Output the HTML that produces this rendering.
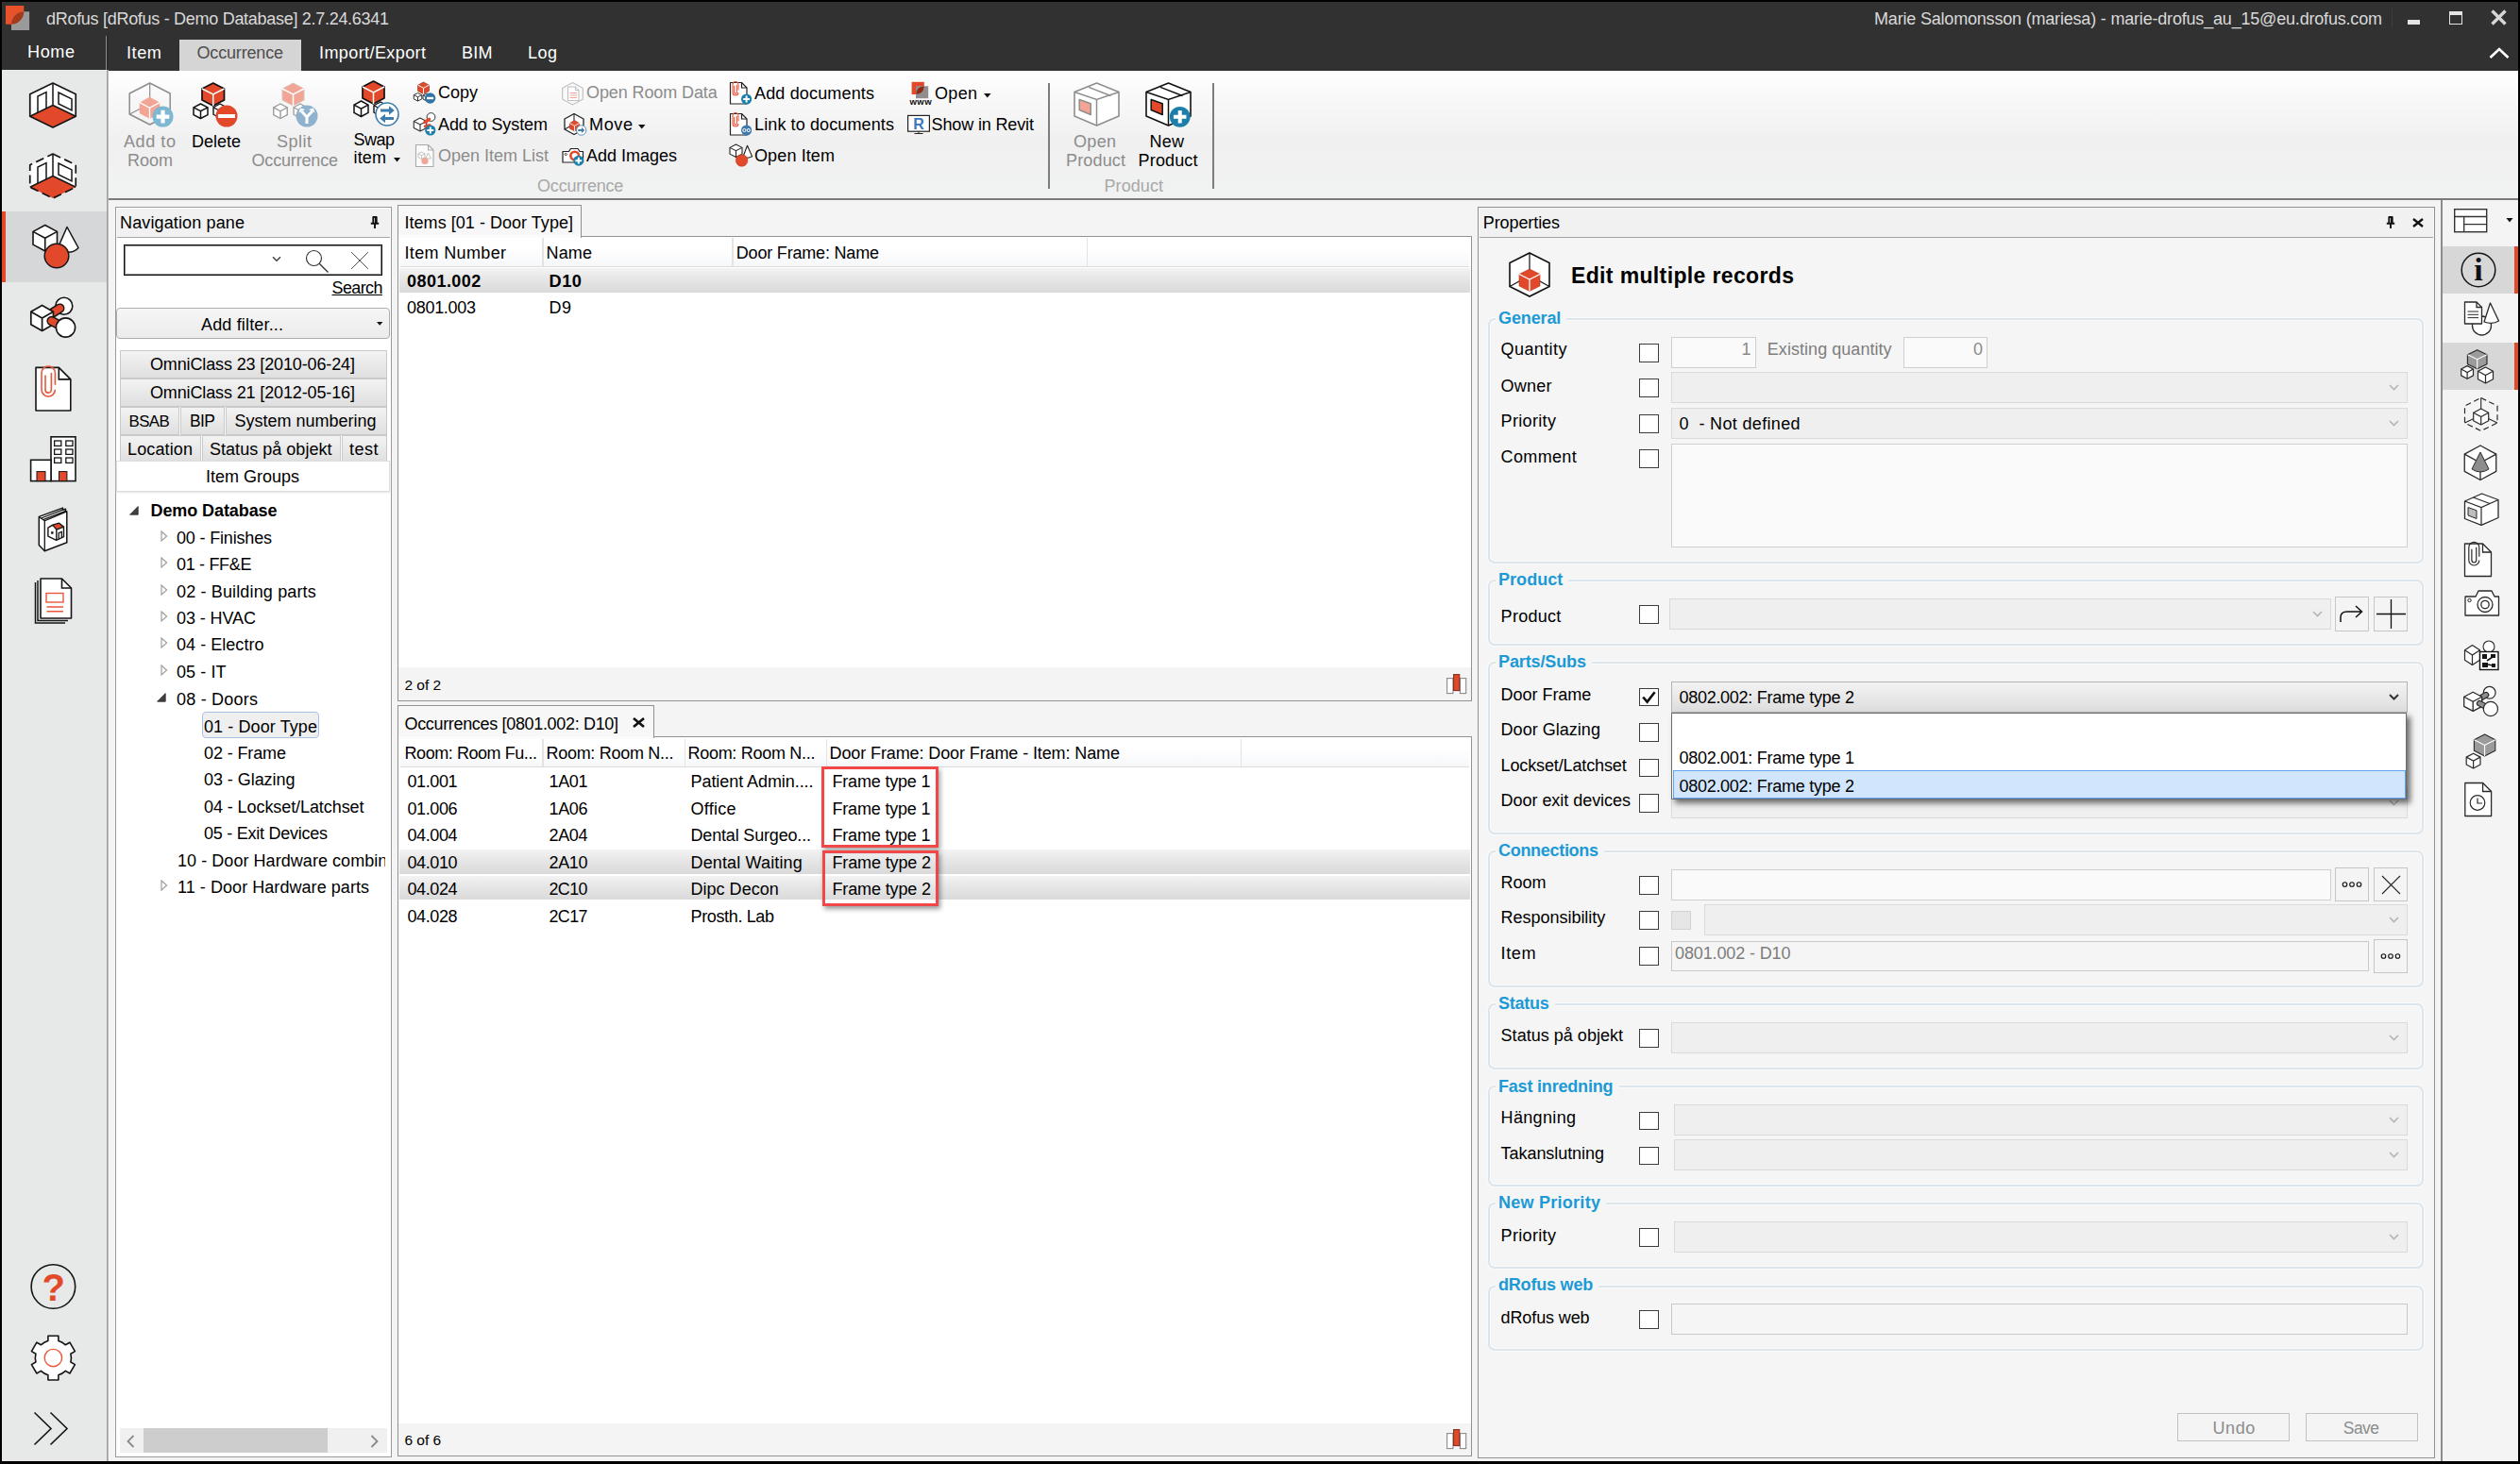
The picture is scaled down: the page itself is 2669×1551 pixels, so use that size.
<!DOCTYPE html>
<html lang="en"><head><meta charset="utf-8"><title>dRofus [dRofus - Demo Database] 2.7.24.6341</title>
<style>
html,body{margin:0;padding:0}
body{width:2669px;height:1551px;position:relative;overflow:hidden;background:#f4f4f4;
font-family:"Liberation Sans",sans-serif;font-size:18px;color:#000}
body div,body span.t,body svg{position:absolute;box-sizing:border-box}
span.t{white-space:nowrap;display:block}
svg{overflow:visible}
.cb{border:1.5px solid #3c3c3c;background:#fff}
.combo{background:#efefef;border:1px solid #dadada}
.inp{background:#fafafa;border:1px solid #cfcfcf}
.btn{background:#f4f4f4;border:1px solid #c6c6c6}
.grp{border:2px solid #dce5eb;border-radius:7px;box-shadow:inset 0 0 0 1px #fbfbfb,0 0 0 1px #f9fafb}
.tab{background:linear-gradient(#f3f3f3,#dfdfdf);border:1px solid #c9c9c9}
.selrow{background:linear-gradient(#f3f3f3 0%,#e6e6e6 45%,#dadada 100%)}
</style></head><body>
<div style="left:0px;top:0px;width:2669px;height:1551px;background:#000"></div>
<div style="left:2px;top:2px;width:2664.5px;height:1545.5px;background:#f4f4f4"></div>
<div style="left:2px;top:2px;width:2664.5px;height:72px;background:#313131"></div>
<div style="left:114.5px;top:74px;width:2552px;height:1px;background:#313131"></div>
<svg style="left:0px;top:0px;" width="34" height="34" viewBox="0 0 34 34"><path d="M6 6 H25.3 V12.3 A13.3 13.4 0 0 1 12 25.7 H6 Z" fill="#e8522b"/><path d="M31.1 32 H12 V25.7 A13.3 13.4 0 0 1 25.3 12.3 H31.1 Z" fill="#9a9a9a"/><path d="M12 25.7 A13.3 13.4 0 0 1 25.3 12.3 A13.3 13.4 0 0 1 12 25.7 Z" fill="#a6391b"/></svg>
<span id="t1" class="t" style="top:10px;font-size:18px;line-height:20px;color:#d9d9d9;left:49.00px;letter-spacing:-0.291px;">dRofus [dRofus - Demo Database] 2.7.24.6341</span>
<span id="t2" class="t" style="top:10px;font-size:18px;line-height:20px;color:#d9d9d9;left:1985.00px;letter-spacing:-0.189px;">Marie Salomonsson (mariesa) - marie-drofus_au_15@eu.drofus.com</span>
<div style="left:2532.5px;top:9px;width:1px;height:21px;background:#3d3d3d"></div>
<div style="left:2550px;top:21px;width:13px;height:5px;background:#e4e4e4"></div>
<div style="left:2593.5px;top:12px;width:14.5px;height:13.5px;border:1.5px solid #e4e4e4;border-top-width:4px"></div>
<svg style="left:2638px;top:10px;" width="17" height="17" viewBox="0 0 17 17"><path d="M1.5 1.5 L15.5 15.5 M15.5 1.5 L1.5 15.5" stroke="#d6d6d6" stroke-width="3.4" fill="none"/></svg>
<svg style="left:2636px;top:50px;" width="22" height="13" viewBox="0 0 22 13"><path d="M1.5 11 L11 2 L20.5 11" stroke="#fff" stroke-width="2.6" fill="none"/></svg>
<div style="left:111.6px;top:38px;width:1.5px;height:36px;background:#8c8c8c"></div>
<div style="left:113.1px;top:38px;width:2px;height:36px;background:#2a2a2a"></div>
<span id="t3" class="t" style="top:45px;font-size:18.13px;line-height:20px;color:#fff;left:29.00px;letter-spacing:0.550px;">Home</span>
<span id="t4" class="t" style="top:46px;font-size:18.17px;line-height:20px;color:#fff;left:134.00px;letter-spacing:0.550px;">Item</span>
<div style="left:190px;top:42px;width:129px;height:33px;background:#d5d5d5"></div>
<span id="t5" class="t" style="top:46px;font-size:18px;line-height:20px;color:#4d4d4d;left:208.50px;letter-spacing:-0.172px;">Occurrence</span>
<span id="t6" class="t" style="top:46px;font-size:18px;line-height:20px;color:#fff;left:338.00px;letter-spacing:0.413px;">Import/Export</span>
<span id="t7" class="t" style="top:46px;font-size:18px;line-height:20px;color:#fff;left:489.00px;letter-spacing:0.242px;">BIM</span>
<span id="t8" class="t" style="top:46px;font-size:18px;line-height:20px;color:#fff;left:559.00px;letter-spacing:0.477px;">Log</span>
<div style="left:2px;top:74px;width:110.5px;height:1473.5px;background:#e7e8e8"></div>
<div style="left:112.5px;top:74px;width:2px;height:1473.5px;background:linear-gradient(90deg,#8f8f8f,#c9c9c9)"></div>
<div style="left:2px;top:224px;width:110.5px;height:75px;background:#d6d7d9"></div>
<div style="left:2px;top:224px;width:4px;height:75px;background:#e2492b"></div>
<div style="left:114.5px;top:75px;width:2552px;height:135px;background:linear-gradient(#ffffff 0%,#f9f9f9 18%,#f0f0f0 55%,#f1f2f2 100%)"></div>
<div style="left:114.5px;top:209.5px;width:2552px;height:2px;background:#7b7b7b"></div>
<div style="left:1110px;top:88px;width:2px;height:111.5px;background:#7d7d7d"></div>
<div style="left:1284px;top:88px;width:2px;height:111.5px;background:#7d7d7d"></div>
<div style="left:2585px;top:211.5px;width:1.5px;height:1336px;background:#8c8c8c"></div>
<div style="left:2586.5px;top:211.5px;width:80px;height:1336px;background:#f4f4f4"></div>
<div style="left:2586.5px;top:260.5px;width:80px;height:50.5px;background:#d7d7d7"></div>
<div style="left:2663px;top:260.5px;width:3.5px;height:50.5px;background:#e2492b"></div>
<div style="left:2586.5px;top:362.5px;width:80px;height:50.5px;background:#d7d7d7"></div>
<div style="left:2663px;top:362.5px;width:3.5px;height:50.5px;background:#e2492b"></div>
<svg style="left:0;top:0" width="2669" height="220" viewBox="0 0 2669 220"><path d="M158.7 88 L180.2 99.0 V121.0 L158.7 132 L137.2 121.0 V99.0 Z" fill="none" stroke="#8d8d8d" stroke-width="1.5" stroke-linejoin="round"/><path d="M158.7 88 V110.0 L137.2 121.0 M158.7 110.0 L180.2 121.0" fill="none" stroke="#8d8d8d" stroke-width="1.2000000000000002"/><path d="M158.5 103 L169.0 108.625 V119.875 L158.5 125.5 L148.0 119.875 V108.625 Z" fill="#f2a495" stroke="#f2a495" stroke-width="0.5" stroke-linejoin="round"/><path d="M148.0 108.625 L158.5 114.25 L169.0 108.625 M158.5 114.25 V125.5" fill="none" stroke="#fff" stroke-width="1.4"/><circle cx="172.5" cy="123.6" r="11" fill="#7db7d1"/><path d="M165.68 123.6 H179.32 M172.5 116.78 V130.42" stroke="#fff" stroke-width="4.2"/><path d="M233 110 L240.0 113.75 V121.25 L233 125 L226.0 121.25 V113.75 Z" fill="#fff" stroke="#111" stroke-width="1.4" stroke-linejoin="round"/><path d="M226.0 113.75 L233 117.5 L240.0 113.75 M233 117.5 V125" fill="none" stroke="#111" stroke-width="1.4"/><path d="M225.75 88 L237.5 94.0 V106.0 L225.75 112 L214.0 106.0 V94.0 Z" fill="#e2492b" stroke="#111" stroke-width="1.7" stroke-linejoin="round"/><path d="M214.0 94.0 L225.75 100.0 L237.5 94.0 M225.75 100.0 V112" fill="none" stroke="#fff" stroke-width="1.5"/><path d="M212.5 110 L220.0 113.875 V121.625 L212.5 125.5 L205.0 121.625 V113.875 Z" fill="#fff" stroke="#111" stroke-width="1.5" stroke-linejoin="round"/><path d="M205.0 113.875 L212.5 117.75 L220.0 113.875 M212.5 117.75 V125.5" fill="none" stroke="#111" stroke-width="1.5"/><circle cx="240" cy="123" r="11.5" fill="#e2492b"/><rect x="231" y="121" width="18" height="4" fill="#fff"/><path d="M318 110 L325.0 113.75 V121.25 L318 125 L311.0 121.25 V113.75 Z" fill="#fff" stroke="#9c9c9c" stroke-width="1.3" stroke-linejoin="round"/><path d="M311.0 113.75 L318 117.5 L325.0 113.75 M318 117.5 V125" fill="none" stroke="#9c9c9c" stroke-width="1.3"/><path d="M310.5 88 L322.0 94.0 V106.0 L310.5 112 L299.0 106.0 V94.0 Z" fill="#f2a495" stroke="#d9c2bd" stroke-width="1" stroke-linejoin="round"/><path d="M299.0 94.0 L310.5 100.0 L322.0 94.0 M310.5 100.0 V112" fill="none" stroke="#fff" stroke-width="1.5"/><path d="M297 110 L304.25 113.875 V121.625 L297 125.5 L289.75 121.625 V113.875 Z" fill="#fff" stroke="#9c9c9c" stroke-width="1.4" stroke-linejoin="round"/><path d="M289.75 113.875 L297 117.75 L304.25 113.875 M297 117.75 V125.5" fill="none" stroke="#9c9c9c" stroke-width="1.4"/><circle cx="325" cy="123" r="11.5" fill="#8fb2cf"/><path d="M325 131 V124 L319.5 118 M325 124 L330.5 118" stroke="#fff" stroke-width="3" fill="none"/><path d="M316.5 119.5 L318 114.5 L323 116 Z M333.5 119.5 L332 114.5 L327 116 Z" fill="#fff"/><path d="M403 108 L410.0 111.75 V119.25 L403 123 L396.0 119.25 V111.75 Z" fill="#fff" stroke="#111" stroke-width="1.4" stroke-linejoin="round"/><path d="M396.0 111.75 L403 115.5 L410.0 111.75 M403 115.5 V123" fill="none" stroke="#111" stroke-width="1.4"/><path d="M395.5 86 L407.0 92.0 V104.0 L395.5 110 L384.0 104.0 V92.0 Z" fill="#e2492b" stroke="#111" stroke-width="1.7" stroke-linejoin="round"/><path d="M384.0 92.0 L395.5 98.0 L407.0 92.0 M395.5 98.0 V110" fill="none" stroke="#fff" stroke-width="1.5"/><path d="M382.5 107 L390.0 111.125 V119.375 L382.5 123.5 L375.0 119.375 V111.125 Z" fill="#fff" stroke="#111" stroke-width="1.5" stroke-linejoin="round"/><path d="M375.0 111.125 L382.5 115.25 L390.0 111.125 M382.5 115.25 V123.5" fill="none" stroke="#111" stroke-width="1.5"/><circle cx="410" cy="121" r="12" fill="#fff" stroke="#3d7cad" stroke-width="1.6"/><path d="M403 117 H413 M407 125.5 H417" stroke="#3d7cad" stroke-width="3"/><path d="M412 112.2 L417.8 117 L412 121.8 Z M408 120.7 L402.2 125.5 L408 130.3 Z" fill="#3d7cad"/><path d="M448.5 87 L454.5 90.125 V96.375 L448.5 99.5 L442.5 96.375 V90.125 Z" fill="#e2492b" stroke="#8a2a17" stroke-width="0.6" stroke-linejoin="round"/><path d="M442.5 90.125 L448.5 93.25 L454.5 90.125 M448.5 93.25 V99.5" fill="none" stroke="#fff" stroke-width="1"/><path d="M442.5 98.5 L446.75 100.625 V104.875 L442.5 107.0 L438.25 104.875 V100.625 Z" fill="#fff" stroke="#333" stroke-width="1" stroke-linejoin="round"/><path d="M438.25 100.625 L442.5 102.75 L446.75 100.625 M442.5 102.75 V107.0" fill="none" stroke="#333" stroke-width="1"/><path d="M452 99 L456.0 101.0 V105.0 L452 107 L448.0 105.0 V101.0 Z" fill="#fff" stroke="#333" stroke-width="1" stroke-linejoin="round"/><path d="M448.0 101.0 L452 103.0 L456.0 101.0 M452 103.0 V107" fill="none" stroke="#333" stroke-width="1"/><circle cx="455.6" cy="104" r="5.7" fill="#2f74a3"/><rect x="452" y="102.8" width="7.2" height="2.4" fill="#fff"/><path d="M445 125 L451.75 128.5 V135.5 L445 139 L438.25 135.5 V128.5 Z" fill="#fff" stroke="#333" stroke-width="1.1" stroke-linejoin="round"/><path d="M438.25 128.5 L445 132.0 L451.75 128.5 M445 132.0 V139" fill="none" stroke="#333" stroke-width="1.1"/><circle cx="456.5" cy="124" r="4.4" fill="#fff" stroke="#333" stroke-width="1"/><path d="M450 129.5 L454.5 126.3 M450.5 134 L455 133" stroke="#e2492b" stroke-width="3.4" stroke-linecap="round"/><circle cx="455.8" cy="138" r="5.6" fill="#1b7faa"/><path d="M452.32800000000003 138 H459.272 M455.8 134.528 V141.472" stroke="#fff" stroke-width="2"/><path d="M440.5 153.5 H453.5 L459.0 159.0 V176.5 H440.5 Z" fill="#fbfbfb" stroke="#a9a9a9" stroke-width="1.1" stroke-linejoin="round"/><path d="M453.5 153.5 V159.0 H459.0" fill="none" stroke="#a9a9a9" stroke-width="1.1"/><path d="M446.5 161 L450.0 162.875 V166.625 L446.5 168.5 L443.0 166.625 V162.875 Z" fill="#fff" stroke="#b5b5b5" stroke-width="0.8" stroke-linejoin="round"/><path d="M443.0 162.875 L446.5 164.75 L450.0 162.875 M446.5 164.75 V168.5" fill="none" stroke="#b5b5b5" stroke-width="0.8"/><path d="M453.5 162 L456.5 168 H450.8 Z" fill="#fff" stroke="#b5b5b5" stroke-width=".8"/><circle cx="450" cy="170.5" r="3.6" fill="#f2a495"/><path d="M606.5 87.5 L617.3 93.3 V105.2 L606.5 111 L595.7 105.2 V93.3 Z" fill="#fafafa" stroke="#bdbdbd" stroke-width="1.1"/><path d="M601.5 92 H609.5 L613.0 95.5 V106.5 H601.5 Z" fill="#fff" stroke="#b5b5b5" stroke-width="0.9" stroke-linejoin="round"/><path d="M609.5 92 V95.5 H613.0" fill="none" stroke="#b5b5b5" stroke-width="0.9"/><path d="M603.5 98.5 H611 M603.5 101 H611 M603.5 103.5 H611" stroke="#f2a495" stroke-width="1"/><path d="M608 120.5 L618.0 126.0 V137.0 L608 142.5 L598.0 137.0 V126.0 Z" fill="#fff" stroke="#222" stroke-width="1.3" stroke-linejoin="round"/><path d="M608 120.5 V131.5 L598.0 137.0 M608 131.5 L618.0 137.0" fill="none" stroke="#222" stroke-width="1.04"/><path d="M608.5 127.5 L613.75 130.375 V136.125 L608.5 139.0 L603.25 136.125 V130.375 Z" fill="#e2492b" stroke="#a5351f" stroke-width="0.5" stroke-linejoin="round"/><path d="M603.25 130.375 L608.5 133.25 L613.75 130.375 M608.5 133.25 V139.0" fill="none" stroke="#fff" stroke-width="0.9"/><circle cx="615.7" cy="138" r="5.2" fill="#fff" stroke="#5b8fbb" stroke-width="1"/><path d="M612.3 138 H616.5" stroke="#3d7cad" stroke-width="2"/><path d="M616 135 L619.3 138 L616 141 Z" fill="#3d7cad"/><path d="M596 160.5 H602.5 L604.5 157.5 H612 L614 160.5 H617.5 V172 H596 Z" fill="#fff" stroke="#222" stroke-width="1.2" stroke-linejoin="round"/><circle cx="599.3" cy="163.5" r="1.1" fill="none" stroke="#222" stroke-width=".8"/><circle cx="608.7" cy="165" r="4.3" fill="#fff" stroke="#e2492b" stroke-width="2.6"/><circle cx="612.8" cy="170.2" r="5.5" fill="#1b7faa"/><path d="M609.39 170.2 H616.2099999999999 M612.8 166.79 V173.60999999999999" stroke="#fff" stroke-width="2"/><path d="M773.5 87.5 H785.5 L791.0 93.0 V110.0 H773.5 Z" fill="#fff" stroke="#222" stroke-width="1.2" stroke-linejoin="round"/><path d="M785.5 87.5 V93.0 H791.0" fill="none" stroke="#222" stroke-width="1.2"/><path d="M782 95.49 V89.5 A3.0 3.0 0 0 0 776 89.5 V98.0 A3.0 3.0 0 0 0 782 98.0" fill="none" stroke="#e9573d" stroke-width="1.1"/><path d="M777.68 90.85 V97.81 A1.32 1.32 0 0 0 780.32 97.81 V89.69" fill="none" stroke="#e9573d" stroke-width="1.1"/><circle cx="790.6" cy="105" r="5.6" fill="#1b7faa"/><path d="M787.128 105 H794.072 M790.6 101.528 V108.472" stroke="#fff" stroke-width="2"/><path d="M773.5 120.5 H785.5 L791.0 126.0 V143.0 H773.5 Z" fill="#fff" stroke="#222" stroke-width="1.2" stroke-linejoin="round"/><path d="M785.5 120.5 V126.0 H791.0" fill="none" stroke="#222" stroke-width="1.2"/><path d="M782 128.49 V122.5 A3.0 3.0 0 0 0 776 122.5 V131.0 A3.0 3.0 0 0 0 782 131.0" fill="none" stroke="#e9573d" stroke-width="1.1"/><path d="M777.68 123.85 V130.81 A1.32 1.32 0 0 0 780.32 130.81 V122.69" fill="none" stroke="#e9573d" stroke-width="1.1"/><circle cx="790.6" cy="138" r="5.6" fill="#3f79ae"/><circle cx="788.4" cy="138" r="1.6" fill="none" stroke="#fff" stroke-width="1"/><circle cx="792.8" cy="138" r="1.6" fill="none" stroke="#fff" stroke-width="1"/><path d="M779.5 153 L786.0 156.375 V163.125 L779.5 166.5 L773.0 163.125 V156.375 Z" fill="#fff" stroke="#222" stroke-width="1.1" stroke-linejoin="round"/><path d="M773.0 156.375 L779.5 159.75 L786.0 156.375 M779.5 159.75 V166.5" fill="none" stroke="#222" stroke-width="1.1"/><path d="M791.5 154.3 L796.6 165.8 Q792 168.5 787 166 Z" fill="#fff" stroke="#222" stroke-width="1.1" stroke-linejoin="round"/><circle cx="785.6" cy="170" r="6.3" fill="#e2492b" stroke="#b7351c" stroke-width=".5"/><rect x="965.6" y="86.8" width="13.2" height="13.2" fill="#e2492b"/><rect x="970" y="91.2" width="13.2" height="13" fill="#8f8f8f"/><path d="M970.3 99.6 C970.3 94.5 973.8 91.4 978.6 91.4 C978.6 96.6 975 99.6 970.3 99.6Z" fill="#8e2a17"/><rect x="961.6" y="122.4" width="22.8" height="16.8" fill="#fff" stroke="#222" stroke-width="1.2"/><path d="M973 139.2 V141.3 M968.5 141.5 H977.5" stroke="#222" stroke-width="1"/></svg>
<span id="t9" class="t" style="top:123px;font-size:16px;line-height:17px;color:#3a76bd;font-weight:700;left:973.00px;transform:translateX(-50%);">R</span>
<span id="t10" class="t" style="top:102px;font-size:9.55px;line-height:11px;color:#111;font-weight:700;left:963.40px;letter-spacing:0.550px;">www</span>
<svg style="left:0;top:0" width="2669" height="220" viewBox="0 0 2669 220"><path d="M1138 97.5 L1161.5 88 L1185 97.5 V123 L1161.5 133 L1138 123 Z" fill="#fff" stroke="#8f8f8f" stroke-width="1.6" stroke-linejoin="round"/><path d="M1138 97.5 L1161.5 105.5 L1185 97.5 M1161.5 105.5 V133" fill="none" stroke="#8f8f8f" stroke-width="1.5"/><path d="M1153 92.4 L1176.5 101.5" stroke="#8f8f8f" stroke-width="1.5"/><path d="M1143.2 105.5 L1155.2 109.7 V121.5 L1143.2 116.5 Z" fill="#f2a495" stroke="#8f8f8f" stroke-width="1.5" stroke-linejoin="round"/><path d="M1214 97.5 L1237.5 88 L1261 97.5 V123 L1237.5 133 L1214 123 Z" fill="#fff" stroke="#111" stroke-width="1.6" stroke-linejoin="round"/><path d="M1214 97.5 L1237.5 105.5 L1261 97.5 M1237.5 105.5 V133" fill="none" stroke="#111" stroke-width="1.5"/><path d="M1229 92.4 L1252.5 101.5" stroke="#111" stroke-width="1.5"/><path d="M1219.2 105.5 L1231.2 109.7 V121.5 L1219.2 116.5 Z" fill="#e2492b" stroke="#111" stroke-width="1.5" stroke-linejoin="round"/><circle cx="1249.7" cy="123.8" r="10.9" fill="#1b7faa"/><path d="M1242.942 123.8 H1256.458 M1249.7 117.042 V130.558" stroke="#fff" stroke-width="4"/></svg>
<span id="t11" class="t" style="top:140px;font-size:18.07px;line-height:20px;color:#8c8c8c;left:131.00px;letter-spacing:0.550px;">Add to</span>
<span id="t12" class="t" style="top:160px;font-size:18px;line-height:20px;color:#8c8c8c;left:135.00px;letter-spacing:-0.005px;">Room</span>
<span id="t13" class="t" style="top:140px;font-size:18px;line-height:20px;left:203.00px;letter-spacing:-0.006px;">Delete</span>
<span id="t14" class="t" style="top:140px;font-size:18px;line-height:20px;color:#8c8c8c;left:293.00px;letter-spacing:0.496px;">Split</span>
<span id="t15" class="t" style="top:160px;font-size:18px;line-height:20px;color:#8c8c8c;left:266.50px;letter-spacing:-0.172px;">Occurrence</span>
<span id="t16" class="t" style="top:138px;font-size:18px;line-height:20px;left:374.60px;letter-spacing:-0.544px;">Swap</span>
<span id="t17" class="t" style="top:157px;font-size:18px;line-height:20px;left:374.60px;letter-spacing:0.128px;">item</span>
<svg style="left:417px;top:166.5px;" width="7" height="4.5" viewBox="0 0 7 4.5"><path d="M0 0 H7 L3.5 4.5 Z" fill="#111"/></svg>
<span id="t18" class="t" style="top:88px;font-size:18px;line-height:20px;left:464.00px;letter-spacing:-0.010px;">Copy</span>
<span id="t19" class="t" style="top:122px;font-size:18px;line-height:20px;left:464.00px;letter-spacing:-0.089px;">Add to System</span>
<span id="t20" class="t" style="top:155px;font-size:18px;line-height:20px;color:#8c8c8c;left:464.00px;letter-spacing:-0.005px;">Open Item List</span>
<span id="t21" class="t" style="top:88px;font-size:18px;line-height:20px;color:#8c8c8c;left:621.00px;letter-spacing:-0.102px;">Open Room Data</span>
<span id="t22" class="t" style="top:122px;font-size:18.14px;line-height:20px;left:624.00px;letter-spacing:0.550px;">Move</span>
<svg style="left:675.5px;top:131.5px;" width="7.5" height="4.5" viewBox="0 0 7.5 4.5"><path d="M0 0 H7.5 L3.75 4.5 Z" fill="#111"/></svg>
<span id="t23" class="t" style="top:155px;font-size:18px;line-height:20px;left:621.00px;letter-spacing:-0.007px;">Add Images</span>
<span id="t24" class="t" style="top:89px;font-size:18px;line-height:20px;left:799.00px;letter-spacing:0.160px;">Add documents</span>
<span id="t25" class="t" style="top:122px;font-size:18px;line-height:20px;left:799.00px;letter-spacing:0.119px;">Link to documents</span>
<span id="t26" class="t" style="top:155px;font-size:18px;line-height:20px;left:799.00px;letter-spacing:0.119px;">Open Item</span>
<span id="t27" class="t" style="top:89px;font-size:18px;line-height:20px;left:990.00px;letter-spacing:0.318px;">Open</span>
<svg style="left:1041.5px;top:98.5px;" width="7.5" height="4.5" viewBox="0 0 7.5 4.5"><path d="M0 0 H7.5 L3.75 4.5 Z" fill="#111"/></svg>
<span id="t28" class="t" style="top:122px;font-size:18px;line-height:20px;left:986.50px;letter-spacing:-0.130px;">Show in Revit</span>
<span id="t29" class="t" style="top:187px;font-size:18px;line-height:20px;color:#a8a8a8;left:569.00px;letter-spacing:-0.183px;">Occurrence</span>
<span id="t30" class="t" style="top:140px;font-size:18px;line-height:20px;color:#8c8c8c;left:1137.00px;letter-spacing:0.318px;">Open</span>
<span id="t31" class="t" style="top:160px;font-size:18px;line-height:20px;color:#8c8c8c;left:1129.00px;letter-spacing:0.159px;">Product</span>
<span id="t32" class="t" style="top:140px;font-size:18px;line-height:20px;left:1217.50px;letter-spacing:0.192px;">New</span>
<span id="t33" class="t" style="top:160px;font-size:18px;line-height:20px;left:1205.60px;letter-spacing:0.142px;">Product</span>
<span id="t34" class="t" style="top:187px;font-size:18px;line-height:20px;color:#a8a8a8;left:1169.50px;letter-spacing:0.076px;">Product</span>
<svg style="left:0;top:0" width="120" height="1551" viewBox="0 0 120 1551"><path d="M56 88 L80.25 99.75 V123.25 L56 135 L31.75 123.25 V99.75 Z" fill="#fff" stroke="none"/><path d="M31.75 123.25 L56 111.5 L80.25 123.25 L56 135 Z" fill="#e2492b"/><path d="M56 88 L80.25 99.75 V123.25 L56 135 L31.75 123.25 V99.75 Z" fill="none" stroke="#161616" stroke-width="1.7" stroke-linejoin="round"/><path d="M56 88 V111.5 L31.75 123.25 M56 111.5 L80.25 123.25" fill="none" stroke="#161616" stroke-width="1.5"/><path d="M40 119.3 V102.0 L49 97.6 V114.9" fill="none" stroke="#161616" stroke-width="1.5"/><path d="M62 98.0 L76 104.9 V116.9 L62 110.0 Z" fill="none" stroke="#161616" stroke-width="1.5"/><path d="M56 163 L80.25 174.75 V198.25 L56 210 L31.75 198.25 V174.75 Z" fill="#fff" stroke="none"/><path d="M31.75 198.25 L56 186.5 L80.25 198.25 L56 210 Z" fill="#e2492b"/><path d="M56 163 L80.25 174.75 V198.25 L56 210 L31.75 198.25 V174.75 Z" fill="none" stroke="#161616" stroke-width="1.7" stroke-linejoin="round" stroke-dasharray="9 4.5"/><path d="M56 163 V186.5 L31.75 198.25 M56 186.5 L80.25 198.25" fill="none" stroke="#161616" stroke-width="1.5"/><path d="M40 194.3 V177.0 L49 172.6 V189.9" fill="none" stroke="#161616" stroke-width="1.5"/><path d="M62 173.0 L76 179.9 V191.9 L62 185.0 Z" fill="none" stroke="#161616" stroke-width="1.5"/><path d="M47.75 238.5 L60.5 245.375 V259.125 L47.75 266.0 L35.0 259.125 V245.375 Z" fill="#fff" stroke="#161616" stroke-width="1.6" stroke-linejoin="round"/><path d="M35.0 245.375 L47.75 252.25 L60.5 245.375 M47.75 252.25 V266.0" fill="none" stroke="#161616" stroke-width="1.6"/><path d="M71 240.5 L83 262.5 Q78 268.5 68 267 L62 261 Z" fill="#fff" stroke="#161616" stroke-width="1.5" stroke-linejoin="round"/><circle cx="60" cy="271" r="12.8" fill="#e2492b" stroke="#161616" stroke-width="1.5"/><circle cx="67.8" cy="324.3" r="9" fill="#fff" stroke="#161616" stroke-width="1.6"/><path d="M54 332.5 L63.3 326.6" stroke="#161616" stroke-width="10.4" stroke-linecap="round"/><path d="M54 332.5 L63.3 326.6" stroke="#e2492b" stroke-width="7.4" stroke-linecap="round"/><path d="M44.6 323.4 L56.400000000000006 330.15 V343.65 L44.6 350.4 L32.8 343.65 V330.15 Z" fill="#fff" stroke="#161616" stroke-width="1.7" stroke-linejoin="round"/><path d="M32.8 330.15 L44.6 336.9 L56.400000000000006 330.15 M44.6 336.9 V350.4" fill="none" stroke="#161616" stroke-width="1.7"/><path d="M54.6 340 L64 345" stroke="#161616" stroke-width="10.4" stroke-linecap="round"/><path d="M54.6 340 L64 345" stroke="#e2492b" stroke-width="7.4" stroke-linecap="round"/><circle cx="69.5" cy="347" r="10.1" fill="#fff" stroke="#161616" stroke-width="1.6"/><path d="M38 389.4 H62.3 L74.8 401.9 V435.0 H38 Z" fill="#fff" stroke="#161616" stroke-width="1.6" stroke-linejoin="round"/><path d="M62.3 389.4 V401.9 H74.8" fill="none" stroke="#161616" stroke-width="1.6"/><path d="M58.4 407.84 V395.2 A7.2 7.2 0 0 0 44 395.2 V412.8 A7.2 7.2 0 0 0 58.4 412.8" fill="none" stroke="#e9573d" stroke-width="1.6"/><path d="M48.032000000000004 397.6 V412.96 A3.168 3.168 0 0 0 54.368 412.96 V395.04" fill="none" stroke="#e9573d" stroke-width="1.6"/><rect x="54" y="462.8" width="26" height="46.8" fill="#fff" stroke="#161616" stroke-width="1.6"/><rect x="32.6" y="487.3" width="21.4" height="22.3" fill="#fff" stroke="#161616" stroke-width="1.6"/><rect x="57.6" y="467" width="7.2" height="5.4" fill="#fff" stroke="#161616" stroke-width="1.3"/><rect x="69.8" y="467" width="7.2" height="5.4" fill="#fff" stroke="#161616" stroke-width="1.3"/><rect x="57.6" y="476" width="7.2" height="5.4" fill="#fff" stroke="#161616" stroke-width="1.3"/><rect x="69.8" y="476" width="7.2" height="5.4" fill="#fff" stroke="#161616" stroke-width="1.3"/><rect x="57.6" y="485" width="7.2" height="5.4" fill="#fff" stroke="#161616" stroke-width="1.3"/><rect x="69.8" y="485" width="7.2" height="5.4" fill="#fff" stroke="#161616" stroke-width="1.3"/><rect x="39" y="499.6" width="9" height="10" fill="#e2492b" stroke="#161616" stroke-width="1"/><rect x="62.5" y="499.6" width="8.4" height="10" fill="#e2492b" stroke="#161616" stroke-width="1"/><path d="M41.3 547.4 L66.4 538.1 V540.2 L69.5 539.2 V541.4 L70.8 542 V574.7 L47.3 583.7 L41.3 577.5 Z" fill="#fff" stroke="#161616" stroke-width="1.5" stroke-linejoin="round"/><path d="M41.3 547.4 L47.3 551.8 L70.8 542 M47.3 551.8 V583.7 M43.6 549 L66.4 540.2 M45.6 550.6 L69.5 541.4" fill="none" stroke="#161616" stroke-width="1.3"/><path d="M55.8 556.1 L62.6 554.2 L67.5 558.1 L59.9 561.1 Z" fill="#e2492b"/><path d="M50.9 559.2 L55.8 556.1 L62.6 554.2 L67.5 558.1 V568.7 L59.7 572.3 L50.9 568.2 Z M55.8 556.1 L59.9 561.1 L67.5 558.1 M59.8 561.1 V572.3" fill="none" stroke="#161616" stroke-width="1.4" stroke-linejoin="round"/><path d="M62.2 571 V564.6 L65.3 563.4 V569.6" fill="none" stroke="#161616" stroke-width="1.3"/><rect x="54.1" y="563.2" width="2.4" height="2.5" fill="#161616"/><path d="M37.5 617 V660 H69" fill="none" stroke="#161616" stroke-width="1.5"/><path d="M40 615 V657.5 H72" fill="none" stroke="#161616" stroke-width="1.5"/><path d="M43 613 H65.5 L75.5 623 V655 H43 Z" fill="#fff" stroke="#161616" stroke-width="1.6" stroke-linejoin="round"/><path d="M65.5 613 V623 H75.5" fill="none" stroke="#161616" stroke-width="1.6"/><rect x="49" y="628.5" width="18" height="9.5" fill="none" stroke="#e9573d" stroke-width="1.4"/><path d="M49.5 643 H67 M49.5 647.8 H67" stroke="#e9573d" stroke-width="1.4"/><circle cx="56.4" cy="1363" r="23.3" fill="none" stroke="#161616" stroke-width="1.6"/><path d="M50.9 1420.4 L50.9 1415.2 L61.9 1415.2 L61.9 1420.4 A19.0 19.0 0 0 1 69.4 1424.8 L73.9 1422.2 L79.4 1431.6 L74.9 1434.2 A19.0 19.0 0 0 1 74.9 1443.0 L79.4 1445.6 L73.9 1455.0 L69.4 1452.4 A19.0 19.0 0 0 1 61.9 1456.8 L61.9 1462.0 L50.9 1462.0 L50.9 1456.8 A19.0 19.0 0 0 1 43.4 1452.4 L38.9 1455.0 L33.4 1445.6 L37.9 1443.0 A19.0 19.0 0 0 1 37.9 1434.2 L33.4 1431.6 L38.9 1422.2 L43.4 1424.8 A19.0 19.0 0 0 1 50.9 1420.4 Z" fill="#fff" stroke="#161616" stroke-width="1.6" stroke-linejoin="round"/><circle cx="56.4" cy="1438.6" r="9.2" fill="none" stroke="#e9573d" stroke-width="1.4"/><path d="M36.5 1496.5 L54 1513.5 L36.5 1530.5 M53.5 1496.5 L71 1513.5 L53.5 1530.5" fill="none" stroke="#161616" stroke-width="1.6"/></svg>
<span id="t35" class="t" style="top:1342px;font-size:40px;line-height:44px;color:#e2492b;font-weight:700;left:56.60px;transform:translateX(-50%);">?</span>
<svg style="left:0;top:0" width="2669" height="900" viewBox="0 0 2669 900"><rect x="2599.7" y="221.7" width="34" height="24" fill="#fff" stroke="#333" stroke-width="1.4"/><path d="M2599.7 229.5 H2633.7 M2609.7 229.5 V245.7 M2609.7 237.6 H2633.7" stroke="#333" stroke-width="1.3" fill="none"/><path d="M2654.5 231 H2661.5 L2658 235.5 Z" fill="#111"/><circle cx="2625" cy="286" r="17.8" fill="none" stroke="#161616" stroke-width="1.5"/><circle cx="2628.5" cy="345" r="10" fill="#fff" stroke="#2a2a2a" stroke-width="1.3"/><path d="M2637.5 321 L2646.5 340 Q2640 344 2631 341 Z" fill="#fff" stroke="#2a2a2a" stroke-width="1.3" stroke-linejoin="round"/><path d="M2610.5 320 H2623.0 L2628.5 325.5 V343 H2610.5 Z" fill="#fff" stroke="#2a2a2a" stroke-width="1.3" stroke-linejoin="round"/><path d="M2623.0 320 V325.5 H2628.5" fill="none" stroke="#2a2a2a" stroke-width="1.3"/><path d="M2613.5 330 H2625 M2613.5 333.3 H2625 M2613.5 336.6 H2625" stroke="#2a2a2a" stroke-width="1"/><path d="M2623.7 370.7 L2633.95 375.7 V385.7 L2623.7 390.7 L2613.45 385.7 V375.7 Z" fill="#9b9b9b" stroke="#2a2a2a" stroke-width="1.2" stroke-linejoin="round"/><path d="M2613.45 375.7 L2623.7 380.7 L2633.95 375.7 M2623.7 380.7 V390.7" fill="none" stroke="#fff" stroke-width="1.1"/><path d="M2613.1 387.6 L2619.5 391.02500000000003 V397.875 L2613.1 401.3 L2606.7 397.875 V391.02500000000003 Z" fill="#fff" stroke="#2a2a2a" stroke-width="1.2" stroke-linejoin="round"/><path d="M2606.7 391.02500000000003 L2613.1 394.45000000000005 L2619.5 391.02500000000003 M2613.1 394.45000000000005 V401.3" fill="none" stroke="#2a2a2a" stroke-width="1.2"/><path d="M2632.5 389 L2640.5 393.25 V401.75 L2632.5 406 L2624.5 401.75 V393.25 Z" fill="#fff" stroke="#2a2a2a" stroke-width="1.2" stroke-linejoin="round"/><path d="M2624.5 393.25 L2632.5 397.5 L2640.5 393.25 M2632.5 397.5 V406" fill="none" stroke="#2a2a2a" stroke-width="1.2"/><path d="M2627.7 421.5 L2645 430 V448 L2627.7 456.5 L2610.5 448 V430 Z" fill="none" stroke="#2a2a2a" stroke-width="1.2" stroke-dasharray="6 3.5"/><path d="M2627.7 421.5 V436 M2610.5 448 L2620 443.5 M2645 448 L2635.5 443.5" stroke="#2a2a2a" stroke-width="1.1"/><path d="M2627.7 433 L2635.7 437.25 V445.75 L2627.7 450 L2619.7 445.75 V437.25 Z" fill="#fff" stroke="#2a2a2a" stroke-width="1.2" stroke-linejoin="round"/><path d="M2619.7 437.25 L2627.7 441.5 L2635.7 437.25 M2627.7 441.5 V450" fill="none" stroke="#2a2a2a" stroke-width="1.2"/><path d="M2627 472 L2643.75 481.125 V499.375 L2627 508.5 L2610.25 499.375 V481.125 Z" fill="#fff" stroke="#2a2a2a" stroke-width="1.3" stroke-linejoin="round"/><path d="M2610.25 481.125 L2627 490.25 L2643.75 481.125 M2627 490.25 V508.5" fill="none" stroke="#2a2a2a" stroke-width="1.3"/><path d="M2627 479 L2636 497 Q2627 503 2618 497 Z" fill="#8d8d8d" stroke="#2a2a2a" stroke-width="1"/><path d="M2610.5 531 L2628.5 523 L2646 529.5 V548.5 L2628 556.3 L2610.5 549.5 Z" fill="#fff" stroke="#2a2a2a" stroke-width="1.3" stroke-linejoin="round"/><path d="M2610.5 531 L2628 537.5 L2646 529.5 M2628 537.5 V556.3 M2619.5 527 L2637 533.5" fill="none" stroke="#2a2a2a" stroke-width="1.2"/><path d="M2614 537.5 L2623 540.8 V549.5 L2614 546 Z" fill="#bdbdbd" stroke="#2a2a2a" stroke-width="1"/><path d="M2610.5 576 H2629.5 L2638.5 585 V610.5 H2610.5 Z" fill="#fff" stroke="#2a2a2a" stroke-width="1.3" stroke-linejoin="round"/><path d="M2629.5 576 V585 H2638.5" fill="none" stroke="#2a2a2a" stroke-width="1.3"/><path d="M2625.8 589.6519999999999 V579.9 A5.5 5.5 0 0 0 2614.8 579.9 V593.5 A5.5 5.5 0 0 0 2625.8 593.5" fill="none" stroke="#2a2a2a" stroke-width="1.2"/><path d="M2617.88 581.78 V593.588 A2.42 2.42 0 0 0 2622.7200000000003 593.588 V579.812" fill="none" stroke="#2a2a2a" stroke-width="1.2"/><path d="M2611 632 H2622 L2625 626 H2639 L2642 632 H2646.5 V652 H2611 Z" fill="#fff" stroke="#2a2a2a" stroke-width="1.3" stroke-linejoin="round"/><circle cx="2615.5" cy="636" r="1.7" fill="none" stroke="#2a2a2a" stroke-width="1"/><circle cx="2632" cy="640.5" r="8" fill="none" stroke="#2a2a2a" stroke-width="1.3"/><circle cx="2632" cy="640.5" r="4.2" fill="none" stroke="#2a2a2a" stroke-width="1.3"/><circle cx="2636" cy="685" r="6" fill="#fff" stroke="#2a2a2a" stroke-width="1.1"/><path d="M2618.5 683.5 L2626.5 688.75 V699.25 L2618.5 704.5 L2610.5 699.25 V688.75 Z" fill="#fff" stroke="#2a2a2a" stroke-width="1.2" stroke-linejoin="round"/><path d="M2610.5 688.75 L2618.5 694.0 L2626.5 688.75 M2618.5 694.0 V704.5" fill="none" stroke="#2a2a2a" stroke-width="1.2"/><rect x="2626.5" y="690.5" width="19.5" height="19" fill="#fff" stroke="#161616" stroke-width="1.4"/><path d="M2629 693 h5 v5 h-5z M2638 693 h5 v4 h-5z M2629 702 h6 v5 h-6z M2639 703 h4 v4 h-4z" fill="#161616"/><path d="M2634 700 L2640 696 M2635 704 L2640 705" stroke="#161616" stroke-width="1.6"/><circle cx="2636.7" cy="733.8" r="6.4" fill="#fff" stroke="#2a2a2a" stroke-width="1.2"/><path d="M2626.5 740 L2633 736.2" stroke="#2a2a2a" stroke-width="6.6" stroke-linecap="round"/><path d="M2626.5 740 L2633 736.2" stroke="#8e8e8e" stroke-width="4.3" stroke-linecap="round"/><path d="M2619.2 733.2 L2628.7 738.25 V748.35 L2619.2 753.4000000000001 L2609.7 748.35 V738.25 Z" fill="#fff" stroke="#2a2a2a" stroke-width="1.3" stroke-linejoin="round"/><path d="M2609.7 738.25 L2619.2 743.3000000000001 L2628.7 738.25 M2619.2 743.3000000000001 V753.4000000000001" fill="none" stroke="#2a2a2a" stroke-width="1.3"/><path d="M2626.2 745.2 L2633 748.8" stroke="#2a2a2a" stroke-width="6.6" stroke-linecap="round"/><path d="M2626.2 745.2 L2633 748.8" stroke="#8e8e8e" stroke-width="4.3" stroke-linecap="round"/><circle cx="2637.9" cy="751" r="7.6" fill="#fff" stroke="#2a2a2a" stroke-width="1.2"/><path d="M2631.6 778 L2642.7999999999997 783.75 V795.25 L2631.6 801 L2620.4 795.25 V783.75 Z" fill="#9b9b9b" stroke="#2a2a2a" stroke-width="1.1" stroke-linejoin="round"/><path d="M2620.4 783.75 L2631.6 789.5 L2642.7999999999997 783.75 M2631.6 789.5 V801" fill="none" stroke="#fff" stroke-width="1.1"/><path d="M2619.6 798.2 L2627.0 802.1500000000001 V810.0500000000001 L2619.6 814.0 L2612.2 810.0500000000001 V802.1500000000001 Z" fill="#fff" stroke="#2a2a2a" stroke-width="1.2" stroke-linejoin="round"/><path d="M2612.2 802.1500000000001 L2619.6 806.1 L2627.0 802.1500000000001 M2619.6 806.1 V814.0" fill="none" stroke="#2a2a2a" stroke-width="1.2"/><path d="M2610.8 829.5 H2629.6000000000004 L2638.6000000000004 838.5 V864.5 H2610.8 Z" fill="#fff" stroke="#2a2a2a" stroke-width="1.3" stroke-linejoin="round"/><path d="M2629.6000000000004 829.5 V838.5 H2638.6000000000004" fill="none" stroke="#2a2a2a" stroke-width="1.3"/><circle cx="2624" cy="850.5" r="7.8" fill="none" stroke="#2a2a2a" stroke-width="1.2"/><path d="M2624 845.5 V851 H2629" fill="none" stroke="#2a2a2a" stroke-width="1.2"/></svg>
<span id="t36" class="t" style="top:267px;font-size:34px;line-height:38px;color:#111;font-weight:700;left:2625.00px;transform:translateX(-50%);font-family:'Liberation Serif',serif;">i</span>
<div style="left:122px;top:219px;width:292.5px;height:1325px;background:#fff;border:1.5px solid #9a9a9a"></div>
<div style="left:123.5px;top:220.5px;width:289.5px;height:31.5px;background:#f1f1f1;border-bottom:1.5px solid #a6a6a6"></div>
<span id="t37" class="t" style="top:226px;font-size:18px;line-height:20px;left:127.00px;letter-spacing:0.135px;">Navigation pane</span>
<svg style="left:392px;top:229px;" width="10" height="14" viewBox="0 0 10 14"><path d="M2.6 1 H7.4 M3.3 1 V7.6 M6.7 1 V7.6 M0.8 7.8 H9.2 M5 7.8 V13" stroke="#111" stroke-width="1.9" fill="none"/><path d="M5 1.4 H6.8 V7.4 H5Z" fill="#111"/></svg>
<div style="left:131px;top:259.2px;width:274px;height:32.4px;background:#fff;border:1px solid #111;box-shadow:inset 0 0 0 1px rgba(0,0,0,.5)"></div>
<svg style="left:288px;top:270.8px;" width="10" height="7" viewBox="0 0 10 7"><path d="M1 1.2 L5 5.2 L9 1.2" stroke="#444" stroke-width="1.5" fill="none"/></svg>
<svg style="left:323px;top:264px;" width="26" height="26" viewBox="0 0 26 26"><circle cx="9.5" cy="9.5" r="8" stroke="#333" stroke-width="1.15" fill="none"/><path d="M15.2 15.2 L24.5 24.5" stroke="#333" stroke-width="1.3"/></svg>
<svg style="left:371px;top:266px;" width="20" height="20" viewBox="0 0 20 20"><path d="M1 1 L19 19 M19 1 L1 19" stroke="#4a4a4a" stroke-width="0.95"/></svg>
<span id="t38" class="t" style="top:295px;font-size:17.91px;line-height:20px;left:351.50px;letter-spacing:-0.550px;text-decoration:underline;text-underline-offset:1px;text-decoration-thickness:1.3px;">Search</span>
<div style="left:123px;top:326px;width:289.5px;height:32.5px;background:linear-gradient(#f6f6f6,#ebebeb);border:1.5px solid #adadad;border-radius:4px"></div>
<span id="t39" class="t" style="top:334px;font-size:18px;line-height:20px;left:213.00px;letter-spacing:0.163px;">Add filter...</span>
<svg style="left:398.8px;top:341.3px;" width="6.4" height="3.8" viewBox="0 0 6.4 3.8"><path d="M0 0 H6.4 L3.2 3.8 Z" fill="#111"/></svg>
<div class="tab" style="left:127px;top:370.5px;width:282.5px;height:30px;"></div>
<span id="t40" class="t" style="top:376px;font-size:18px;line-height:20px;left:159.00px;letter-spacing:-0.130px;">OmniClass 23 [2010-06-24]</span>
<div class="tab" style="left:127px;top:400.5px;width:282.5px;height:30px;"></div>
<span id="t41" class="t" style="top:406px;font-size:18px;line-height:20px;left:159.00px;letter-spacing:-0.130px;">OmniClass 21 [2012-05-16]</span>
<div class="tab" style="left:127px;top:430.5px;width:62.5px;height:30px;"></div>
<span id="t42" class="t" style="top:437px;font-size:16.83px;line-height:19px;left:136.50px;letter-spacing:-0.550px;">BSAB</span>
<div class="tab" style="left:190.5px;top:430.5px;width:47px;height:30px;"></div>
<span id="t43" class="t" style="top:436px;font-size:17.43px;line-height:20px;left:201.00px;letter-spacing:-0.550px;">BIP</span>
<div class="tab" style="left:238.5px;top:430.5px;width:171px;height:30px;"></div>
<span id="t44" class="t" style="top:436px;font-size:18px;line-height:20px;left:248.50px;letter-spacing:-0.005px;">System numbering</span>
<div class="tab" style="left:127px;top:460.5px;width:85.5px;height:29px;"></div>
<span id="t45" class="t" style="top:466px;font-size:18px;line-height:20px;left:135.00px;letter-spacing:0.134px;">Location</span>
<div class="tab" style="left:213.5px;top:460.5px;width:147px;height:29px;"></div>
<span id="t46" class="t" style="top:466px;font-size:18px;line-height:20px;left:222.00px;letter-spacing:0.027px;">Status på objekt</span>
<div class="tab" style="left:361.5px;top:460.5px;width:48px;height:29px;"></div>
<span id="t47" class="t" style="top:466px;font-size:18px;line-height:20px;left:370.00px;letter-spacing:0.495px;">test</span>
<div style="left:123px;top:488px;width:289.5px;height:33px;background:#fff;border:1.5px solid #dedede;box-shadow:0 1px 2px #e4e4e4"></div>
<span id="t48" class="t" style="top:495px;font-size:18px;line-height:20px;left:218.00px;letter-spacing:-0.005px;">Item Groups</span>
<svg style="left:136.5px;top:535.5px;" width="10" height="10" viewBox="0 0 10 10"><path d="M9.2 0.6 V9.2 H0.6 Z" fill="#404040" stroke="#262626" stroke-width="0.8"/></svg>
<span id="t49" class="t" style="top:531px;font-size:18px;line-height:20px;font-weight:700;left:159.50px;letter-spacing:-0.089px;">Demo Database</span>
<svg style="left:169.5px;top:561.5px;" width="8" height="12" viewBox="0 0 8 12"><path d="M1 1 L6.6 6 L1 11 Z" fill="#fff" stroke="#9f9f9f" stroke-width="1.2"/></svg>
<span id="t50" class="t" style="top:560px;font-size:18px;line-height:20px;left:187.00px;letter-spacing:-0.171px;">00 - Finishes</span>
<svg style="left:169.5px;top:589.5px;" width="8" height="12" viewBox="0 0 8 12"><path d="M1 1 L6.6 6 L1 11 Z" fill="#fff" stroke="#9f9f9f" stroke-width="1.2"/></svg>
<span id="t51" class="t" style="top:588px;font-size:18px;line-height:20px;left:187.00px;letter-spacing:-0.316px;">01 - FF&amp;E</span>
<svg style="left:169.5px;top:618.5px;" width="8" height="12" viewBox="0 0 8 12"><path d="M1 1 L6.6 6 L1 11 Z" fill="#fff" stroke="#9f9f9f" stroke-width="1.2"/></svg>
<span id="t52" class="t" style="top:617px;font-size:18px;line-height:20px;left:187.00px;letter-spacing:0.148px;">02 - Building parts</span>
<svg style="left:169.5px;top:646.5px;" width="8" height="12" viewBox="0 0 8 12"><path d="M1 1 L6.6 6 L1 11 Z" fill="#fff" stroke="#9f9f9f" stroke-width="1.2"/></svg>
<span id="t53" class="t" style="top:645px;font-size:18px;line-height:20px;left:187.00px;letter-spacing:-0.088px;">03 - HVAC</span>
<svg style="left:169.5px;top:674.5px;" width="8" height="12" viewBox="0 0 8 12"><path d="M1 1 L6.6 6 L1 11 Z" fill="#fff" stroke="#9f9f9f" stroke-width="1.2"/></svg>
<span id="t54" class="t" style="top:673px;font-size:18px;line-height:20px;left:187.00px;letter-spacing:0.041px;">04 - Electro</span>
<svg style="left:169.5px;top:703.5px;" width="8" height="12" viewBox="0 0 8 12"><path d="M1 1 L6.6 6 L1 11 Z" fill="#fff" stroke="#9f9f9f" stroke-width="1.2"/></svg>
<span id="t55" class="t" style="top:702px;font-size:18px;line-height:20px;left:187.00px;letter-spacing:0.081px;">05 - IT</span>
<svg style="left:165.5px;top:734px;" width="10" height="10" viewBox="0 0 10 10"><path d="M9.2 0.6 V9.2 H0.6 Z" fill="#404040" stroke="#262626" stroke-width="0.8"/></svg>
<span id="t56" class="t" style="top:731px;font-size:18px;line-height:20px;left:187.00px;letter-spacing:0.217px;">08 - Doors</span>
<div style="left:213.75px;top:754px;width:124px;height:27.5px;background:#efefef;border:1.5px solid #a9bfe4;border-radius:4px"></div>
<span id="t57" class="t" style="top:760px;font-size:18px;line-height:20px;left:216.00px;letter-spacing:0.097px;">01 - Door Type</span>
<span id="t58" class="t" style="top:788px;font-size:18px;line-height:20px;left:216.00px;letter-spacing:-0.115px;">02 - Frame</span>
<span id="t59" class="t" style="top:816px;font-size:18px;line-height:20px;left:216.00px;letter-spacing:-0.051px;">03 - Glazing</span>
<span id="t60" class="t" style="top:845px;font-size:18px;line-height:20px;left:216.00px;letter-spacing:-0.080px;">04 - Lockset/Latchset</span>
<span id="t61" class="t" style="top:873px;font-size:18px;line-height:20px;left:216.00px;letter-spacing:-0.253px;">05 - Exit Devices</span>
<div style="left:186px;top:895px;width:222px;height:30px;overflow:hidden">
<span id="t62" class="t" style="top:7px;font-size:18px;line-height:20px;left:2.00px;letter-spacing:0.052px;">10 - Door Hardware combinations</span>
</div>
<svg style="left:169.5px;top:931.5px;" width="8" height="12" viewBox="0 0 8 12"><path d="M1 1 L6.6 6 L1 11 Z" fill="#fff" stroke="#9f9f9f" stroke-width="1.2"/></svg>
<span id="t63" class="t" style="top:930px;font-size:18px;line-height:20px;left:188.00px;letter-spacing:0.054px;">11 - Door Hardware parts</span>
<div style="left:126.5px;top:1513px;width:283px;height:26px;background:#f0f0f0"></div>
<div style="left:152px;top:1513px;width:195px;height:26px;background:#cdcdcd"></div>
<svg style="left:134px;top:1520px;" width="9" height="14" viewBox="0 0 9 14"><path d="M7.5 1 L1.5 7 L7.5 13" stroke="#8a8a8a" stroke-width="1.8" fill="none"/></svg>
<svg style="left:392px;top:1520px;" width="9" height="14" viewBox="0 0 9 14"><path d="M1.5 1 L7.5 7 L1.5 13" stroke="#8a8a8a" stroke-width="1.8" fill="none"/></svg>
<div style="left:420.5px;top:249.5px;width:1138.5px;height:493.5px;background:#fff;border:1.5px solid #919191"></div>
<div style="left:420.5px;top:216.5px;width:195.5px;height:35px;background:#f7f7f7;border:1.5px solid #919191;border-bottom:none"></div>
<div style="left:422px;top:249px;width:192.5px;height:3px;background:#fbfbfb"></div>
<span id="t64" class="t" style="top:226px;font-size:18px;line-height:20px;left:428.50px;letter-spacing:0.036px;">Items [01 - Door Type]</span>
<div style="left:424px;top:252px;width:1131.5px;height:31px;background:linear-gradient(#ffffff 35%,#f6f7f9 100%);border-bottom:1.5px solid #dcdcdc"></div>
<div style="left:574px;top:252px;width:1.5px;height:30px;background:#e3e3e3"></div>
<div style="left:775px;top:252px;width:1.5px;height:30px;background:#e3e3e3"></div>
<div style="left:1150.5px;top:252px;width:1.5px;height:30px;background:#e3e3e3"></div>
<span id="t65" class="t" style="top:258px;font-size:18px;line-height:20px;left:428.50px;letter-spacing:0.347px;">Item Number</span>
<span id="t66" class="t" style="top:258px;font-size:18px;line-height:20px;left:578.50px;letter-spacing:0.161px;">Name</span>
<span id="t67" class="t" style="top:258px;font-size:18px;line-height:20px;left:779.75px;letter-spacing:-0.186px;">Door Frame: Name</span>
<div class="selrow" style="left:423px;top:284px;width:1133.5px;height:26px;"></div>
<span id="t68" class="t" style="top:288px;font-size:18px;line-height:20px;font-weight:700;left:431.00px;letter-spacing:0.460px;">0801.002</span>
<span id="t69" class="t" style="top:288px;font-size:18.2px;line-height:20px;font-weight:700;left:581.50px;letter-spacing:0.550px;">D10</span>
<span id="t70" class="t" style="top:316px;font-size:18px;line-height:20px;left:431.00px;letter-spacing:-0.297px;">0801.003</span>
<span id="t71" class="t" style="top:316px;font-size:18px;line-height:20px;left:581.50px;letter-spacing:0.484px;">D9</span>
<div style="left:422px;top:707px;width:1135.5px;height:35px;background:#f4f4f4"></div>
<span id="t72" class="t" style="top:717px;font-size:15.5px;line-height:17px;left:428.50px;letter-spacing:-0.056px;">2 of 2</span>
<svg style="left:1532px;top:714px;" width="22" height="22" viewBox="0 0 22 22"><rect x="0.6" y="4.6" width="6.3" height="16" fill="#fff" stroke="#8a8a8a" stroke-width="1.1"/><rect x="14.4" y="4.6" width="6.3" height="16" fill="#fff" stroke="#8a8a8a" stroke-width="1.1"/><rect x="7.6" y="0.6" width="6.2" height="17" fill="#e2492b" stroke="#7a2a1a" stroke-width="1"/></svg>
<div style="left:420.5px;top:780px;width:1138.5px;height:763px;background:#fff;border:1.5px solid #919191"></div>
<div style="left:420.5px;top:747px;width:272.5px;height:35px;background:#f7f7f7;border:1.5px solid #919191;border-bottom:none"></div>
<div style="left:422px;top:779.5px;width:269.5px;height:3px;background:#fbfbfb"></div>
<span id="t73" class="t" style="top:757px;font-size:18px;line-height:20px;left:428.50px;letter-spacing:-0.332px;">Occurrences [0801.002: D10]</span>
<svg style="left:670px;top:760px;" width="13" height="11" viewBox="0 0 13 11"><path d="M1 1 L12 10 M12 1 L1 10" stroke="#111" stroke-width="2.6" fill="none"/></svg>
<div style="left:424px;top:782.5px;width:1131.5px;height:30.5px;background:linear-gradient(#ffffff 35%,#f6f7f9 100%);border-bottom:1.5px solid #dcdcdc"></div>
<div style="left:574px;top:782.5px;width:1.5px;height:29.5px;background:#e3e3e3"></div>
<div style="left:724.5px;top:782.5px;width:1.5px;height:29.5px;background:#e3e3e3"></div>
<div style="left:874.5px;top:782.5px;width:1.5px;height:29.5px;background:#e3e3e3"></div>
<div style="left:1313.5px;top:782.5px;width:1.5px;height:29.5px;background:#e3e3e3"></div>
<span id="t74" class="t" style="top:788px;font-size:18px;line-height:20px;left:428.50px;letter-spacing:-0.436px;">Room: Room Fu...</span>
<span id="t75" class="t" style="top:788px;font-size:18px;line-height:20px;left:578.50px;letter-spacing:-0.289px;">Room: Room N...</span>
<span id="t76" class="t" style="top:788px;font-size:18px;line-height:20px;left:728.50px;letter-spacing:-0.289px;">Room: Room N...</span>
<span id="t77" class="t" style="top:788px;font-size:18px;line-height:20px;left:878.50px;letter-spacing:-0.105px;">Door Frame: Door Frame - Item: Name</span>
<div class="selrow" style="left:423px;top:900px;width:1133.5px;height:25.5px;"></div>
<div class="selrow" style="left:423px;top:927.5px;width:1133.5px;height:25.5px;"></div>
<span id="t78" class="t" style="top:818px;font-size:18px;line-height:20px;left:431.50px;letter-spacing:-0.412px;">01.001</span>
<span id="t79" class="t" style="top:818px;font-size:18px;line-height:20px;left:581.50px;letter-spacing:-0.349px;">1A01</span>
<span id="t80" class="t" style="top:818px;font-size:18px;line-height:20px;left:731.50px;letter-spacing:-0.067px;">Patient Admin....</span>
<span id="t81" class="t" style="top:818px;font-size:18px;line-height:20px;left:881.50px;letter-spacing:-0.186px;">Frame type 1</span>
<span id="t82" class="t" style="top:847px;font-size:18px;line-height:20px;left:431.50px;letter-spacing:-0.412px;">01.006</span>
<span id="t83" class="t" style="top:847px;font-size:18px;line-height:20px;left:581.50px;letter-spacing:-0.349px;">1A06</span>
<span id="t84" class="t" style="top:847px;font-size:18px;line-height:20px;left:731.50px;letter-spacing:0.263px;">Office</span>
<span id="t85" class="t" style="top:847px;font-size:18px;line-height:20px;left:881.50px;letter-spacing:-0.186px;">Frame type 1</span>
<span id="t86" class="t" style="top:875px;font-size:18px;line-height:20px;left:431.50px;letter-spacing:-0.412px;">04.004</span>
<span id="t87" class="t" style="top:875px;font-size:18px;line-height:20px;left:581.50px;letter-spacing:-0.349px;">2A04</span>
<span id="t88" class="t" style="top:875px;font-size:18px;line-height:20px;left:731.50px;letter-spacing:-0.172px;">Dental Surgeo...</span>
<span id="t89" class="t" style="top:875px;font-size:18px;line-height:20px;left:881.50px;letter-spacing:-0.186px;">Frame type 1</span>
<span id="t90" class="t" style="top:904px;font-size:18px;line-height:20px;left:431.50px;letter-spacing:-0.412px;">04.010</span>
<span id="t91" class="t" style="top:904px;font-size:18px;line-height:20px;left:581.50px;letter-spacing:-0.349px;">2A10</span>
<span id="t92" class="t" style="top:904px;font-size:18px;line-height:20px;left:731.50px;letter-spacing:0.143px;">Dental Waiting</span>
<span id="t93" class="t" style="top:904px;font-size:18px;line-height:20px;left:881.50px;letter-spacing:-0.141px;">Frame type 2</span>
<span id="t94" class="t" style="top:932px;font-size:18px;line-height:20px;left:431.50px;letter-spacing:-0.412px;">04.024</span>
<span id="t95" class="t" style="top:932px;font-size:17.84px;line-height:20px;left:581.50px;letter-spacing:-0.550px;">2C10</span>
<span id="t96" class="t" style="top:932px;font-size:18px;line-height:20px;left:731.50px;letter-spacing:0.023px;">Dipc Decon</span>
<span id="t97" class="t" style="top:932px;font-size:18px;line-height:20px;left:881.50px;letter-spacing:-0.141px;">Frame type 2</span>
<span id="t98" class="t" style="top:961px;font-size:18px;line-height:20px;left:431.50px;letter-spacing:-0.412px;">04.028</span>
<span id="t99" class="t" style="top:961px;font-size:17.84px;line-height:20px;left:581.50px;letter-spacing:-0.550px;">2C17</span>
<span id="t100" class="t" style="top:961px;font-size:18px;line-height:20px;left:731.50px;letter-spacing:-0.356px;">Prosth. Lab</span>
<div style="left:870px;top:812px;width:124px;height:86px;border:3px solid #f04848;box-shadow:2px 3px 5px rgba(0,0,0,.35)"></div>
<div style="left:871px;top:901px;width:123px;height:59px;border:3px solid #f04848;box-shadow:2px 3px 5px rgba(0,0,0,.4)"></div>
<div style="left:422px;top:1507.5px;width:1135.5px;height:34px;background:#f4f4f4"></div>
<span id="t101" class="t" style="top:1517px;font-size:15.5px;line-height:17px;left:428.50px;letter-spacing:-0.056px;">6 of 6</span>
<svg style="left:1532px;top:1514px;" width="22" height="22" viewBox="0 0 22 22"><rect x="0.6" y="4.6" width="6.3" height="16" fill="#fff" stroke="#8a8a8a" stroke-width="1.1"/><rect x="14.4" y="4.6" width="6.3" height="16" fill="#fff" stroke="#8a8a8a" stroke-width="1.1"/><rect x="7.6" y="0.6" width="6.2" height="17" fill="#e2492b" stroke="#7a2a1a" stroke-width="1"/></svg>
<div style="left:1565px;top:219px;width:1013.5px;height:1325.5px;background:#f5f5f5;border:1.5px solid #919191"></div>
<div style="left:1566.5px;top:220.5px;width:1010.5px;height:31.5px;background:#f1f1f1;border-bottom:1.5px solid #a3a3a3"></div>
<span id="t102" class="t" style="top:226px;font-size:18px;line-height:20px;left:1570.75px;letter-spacing:-0.089px;">Properties</span>
<svg style="left:2527px;top:229px;" width="10" height="14" viewBox="0 0 10 14"><path d="M2.6 1 H7.4 M3.3 1 V7.6 M6.7 1 V7.6 M0.8 7.8 H9.2 M5 7.8 V13" stroke="#111" stroke-width="1.9" fill="none"/><path d="M5 1.4 H6.8 V7.4 H5Z" fill="#111"/></svg>
<svg style="left:2554.5px;top:231px;" width="12" height="10" viewBox="0 0 12 10"><path d="M1 1 L11 9 M11 1 L1 9" stroke="#111" stroke-width="2.3" fill="none"/></svg>
<svg style="left:1596px;top:266px;" width="48" height="50" viewBox="0 0 48 50"><path d="M24 2 L45 12.5 V37.5 L24 48 L3 37.5 V12.5 Z" fill="#fff" stroke="#111" stroke-width="1.6"/><path d="M24 2 V26 M24 26 L3 37.5 M24 26 L45 37.5" stroke="#111" stroke-width="1.2" fill="none"/><path d="M24 19 L35 24.5 V37 L24 42.5 L13 37 V24.5 Z" fill="#e2492b" stroke="#b5351c" stroke-width="0.6"/><path d="M13 24.5 L24 30 L35 24.5 M24 30 V42.5" stroke="#fff" stroke-width="1.3" fill="none"/></svg>
<span id="t103" class="t" style="top:279px;font-size:23px;line-height:26px;font-weight:700;left:1664.00px;letter-spacing:0.362px;">Edit multiple records</span>
<div class="grp" style="left:1576px;top:337px;width:991px;height:260px;"></div>
<div style="left:1584px;top:335px;width:75.29999999999995px;height:6px;background:#f5f5f5"></div>
<span id="t104" class="t" style="top:327px;font-size:18px;line-height:20px;color:#1c9ad6;font-weight:700;left:1587.00px;letter-spacing:-0.124px;">General</span>
<span id="t105" class="t" style="top:360px;font-size:18px;line-height:20px;left:1589.60px;letter-spacing:0.393px;">Quantity</span>
<div class="cb" style="left:1736.2px;top:364.4px;width:20.5px;height:19.5px;"></div>
<div class="inp" style="left:1770.4px;top:356.7px;width:89.3px;height:33.6px;"></div>
<span id="t106" class="t" style="top:360px;font-size:18px;line-height:20px;color:#8a8a8a;left:1854.50px;transform:translateX(-100%);">1</span>
<span id="t107" class="t" style="top:360px;font-size:18px;line-height:20px;color:#7d7d7d;left:1871.80px;letter-spacing:0.045px;">Existing quantity</span>
<div class="inp" style="left:2015.5px;top:356.7px;width:89px;height:33.6px;"></div>
<span id="t108" class="t" style="top:360px;font-size:18px;line-height:20px;color:#8a8a8a;left:2100.00px;transform:translateX(-100%);">0</span>
<span id="t109" class="t" style="top:399px;font-size:18px;line-height:20px;left:1589.60px;letter-spacing:0.221px;">Owner</span>
<div class="cb" style="left:1736.2px;top:401px;width:20.5px;height:19.5px;"></div>
<div class="combo" style="left:1770.4px;top:394.4px;width:780.0px;height:32.80000000000001px;"></div>
<svg style="left:2530.2000000000003px;top:407.29999999999995px;" width="11" height="7" viewBox="0 0 11 7"><path d="M1 1 L5.5 5.5 L10 1" stroke="#b4b4b4" stroke-width="1.6" fill="none"/></svg>
<span id="t110" class="t" style="top:436px;font-size:18px;line-height:20px;left:1589.60px;letter-spacing:0.326px;">Priority</span>
<div class="cb" style="left:1736.2px;top:439px;width:20.5px;height:19.5px;"></div>
<div class="combo" style="left:1770.4px;top:431.9px;width:780.0px;height:33.60000000000002px;"></div>
<svg style="left:2530.2000000000003px;top:445.2px;" width="11" height="7" viewBox="0 0 11 7"><path d="M1 1 L5.5 5.5 L10 1" stroke="#b4b4b4" stroke-width="1.6" fill="none"/></svg>
<span id="t111" class="t" style="top:439px;font-size:18px;line-height:20px;left:1778.40px;letter-spacing:0.341px;">0  - Not defined</span>
<span id="t112" class="t" style="top:474px;font-size:18px;line-height:20px;left:1589.60px;letter-spacing:0.345px;">Comment</span>
<div class="cb" style="left:1736.2px;top:476.4px;width:20.5px;height:19.5px;"></div>
<div class="inp" style="left:1770.4px;top:469.6px;width:780.0px;height:110.6px;"></div>
<div class="grp" style="left:1576px;top:613.8px;width:991px;height:70.5px;"></div>
<div style="left:1584px;top:611.8px;width:77.29999999999995px;height:6px;background:#f5f5f5"></div>
<span id="t113" class="t" style="top:604px;font-size:18px;line-height:20px;color:#1c9ad6;font-weight:700;left:1587.00px;letter-spacing:0.047px;">Product</span>
<span id="t114" class="t" style="top:643px;font-size:18px;line-height:20px;left:1589.60px;letter-spacing:0.276px;">Product</span>
<div class="cb" style="left:1736.2px;top:641.4px;width:20.5px;height:19.5px;"></div>
<div class="combo" style="left:1767.7px;top:634.3px;width:701.6000000000001px;height:33.0px;"></div>
<svg style="left:2449.1000000000004px;top:647.3px;" width="11" height="7" viewBox="0 0 11 7"><path d="M1 1 L5.5 5.5 L10 1" stroke="#b4b4b4" stroke-width="1.6" fill="none"/></svg>
<div class="btn" style="left:2473.4px;top:632.3px;width:36.0px;height:36.90000000000009px;"></div>
<svg style="left:2473.4px;top:632.3px;" width="36.0" height="36.90000000000009" viewBox="0 0 36.0 36.90000000000009"><path d="M6 27 V22 Q6 16 13 16 H28 M22 10 L28.5 16 L22 22" stroke="#111" stroke-width="1.5" fill="none"/></svg>
<div class="btn" style="left:2513.5px;top:632.3px;width:36.90000000000009px;height:36.90000000000009px;"></div>
<svg style="left:2513.5px;top:632.3px;" width="36.90000000000009" height="36.90000000000009" viewBox="0 0 36.90000000000009 36.90000000000009"><path d="M3 18.5 H34 M18.5 3 V34" stroke="#111" stroke-width="1.3" fill="none"/></svg>
<div class="grp" style="left:1576px;top:701px;width:991px;height:183px;"></div>
<div style="left:1584px;top:699px;width:101.90000000000009px;height:6px;background:#f5f5f5"></div>
<span id="t115" class="t" style="top:691px;font-size:18px;line-height:20px;color:#1c9ad6;font-weight:700;left:1587.00px;letter-spacing:-0.127px;">Parts/Subs</span>
<span id="t116" class="t" style="top:726px;font-size:18px;line-height:20px;left:1589.60px;letter-spacing:-0.037px;">Door Frame</span>
<div class="cb" style="left:1736.2px;top:728.5px;width:20.5px;height:19.5px;"></div>
<svg style="left:1739.2px;top:731.5px;" width="15" height="14" viewBox="0 0 15 14"><path d="M1.2 6.5 L5.6 11.6 L13.6 1.2" stroke="#111" stroke-width="2.6" fill="none"/></svg>
<div style="left:1770.4px;top:721.7px;width:780.0px;height:33.3px;background:linear-gradient(#f3f3f3,#dddddd);border:1px solid #b3b3b3"></div>
<svg style="left:2530.2000000000003px;top:734.5px;" width="11" height="7" viewBox="0 0 11 7"><path d="M1 1 L5.5 5.5 L10 1" stroke="#333" stroke-width="2" fill="none"/></svg>
<span id="t117" class="t" style="top:729px;font-size:18px;line-height:20px;left:1778.40px;letter-spacing:-0.263px;">0802.002: Frame type 2</span>
<span id="t118" class="t" style="top:763px;font-size:18px;line-height:20px;left:1589.60px;letter-spacing:0.023px;">Door Glazing</span>
<div class="cb" style="left:1736.2px;top:766.2px;width:20.5px;height:19.5px;"></div>
<span id="t119" class="t" style="top:801px;font-size:18px;line-height:20px;left:1589.60px;letter-spacing:-0.133px;">Lockset/Latchset</span>
<div class="cb" style="left:1736.2px;top:803.7px;width:20.5px;height:19.5px;"></div>
<span id="t120" class="t" style="top:838px;font-size:18px;line-height:20px;left:1589.60px;letter-spacing:-0.041px;">Door exit devices</span>
<div class="cb" style="left:1736.2px;top:841.4px;width:20.5px;height:19.5px;"></div>
<div class="combo" style="left:1770.4px;top:834px;width:780.0px;height:33.299999999999955px;"></div>
<svg style="left:2530.2000000000003px;top:847.15px;" width="11" height="7" viewBox="0 0 11 7"><path d="M1 1 L5.5 5.5 L10 1" stroke="#b4b4b4" stroke-width="1.6" fill="none"/></svg>
<div style="left:1770.4px;top:755.3px;width:779.0999999999999px;height:91.7px;background:#fff;border:1px solid #6c6c6c;box-shadow:4px 4px 6px rgba(0,0,0,.55)"></div>
<span id="t121" class="t" style="top:793px;font-size:18px;line-height:20px;left:1778.40px;letter-spacing:-0.263px;">0802.001: Frame type 1</span>
<div style="left:1771.9px;top:816.2px;width:776.5999999999999px;height:30px;background:#d1e6fd;border:1.5px solid #62a2ee"></div>
<span id="t122" class="t" style="top:823px;font-size:18px;line-height:20px;left:1778.40px;letter-spacing:-0.263px;">0802.002: Frame type 2</span>
<div class="grp" style="left:1576px;top:901px;width:991px;height:145px;"></div>
<div style="left:1584px;top:899px;width:115px;height:6px;background:#f5f5f5"></div>
<span id="t123" class="t" style="top:891px;font-size:18px;line-height:20px;color:#1c9ad6;font-weight:700;left:1587.00px;letter-spacing:-0.302px;">Connections</span>
<span id="t124" class="t" style="top:925px;font-size:18px;line-height:20px;left:1589.60px;letter-spacing:-0.039px;">Room</span>
<div class="cb" style="left:1736.2px;top:928.3px;width:20.5px;height:19.5px;"></div>
<div class="inp" style="left:1770.4px;top:920.6px;width:698.9000000000001px;height:33.4px;"></div>
<div class="btn" style="left:2473.4px;top:919.2px;width:36.0px;height:36.09999999999991px;"></div>
<svg style="left:2473.4px;top:919.2px;" width="36.0" height="36.09999999999991" viewBox="0 0 36.0 36.09999999999991"><circle cx="10.5" cy="18" r="2.3" stroke="#111" stroke-width="1.1" fill="none"/><circle cx="18" cy="18" r="2.3" stroke="#111" stroke-width="1.1" fill="none"/><circle cx="25.5" cy="18" r="2.3" stroke="#111" stroke-width="1.1" fill="none"/></svg>
<div class="btn" style="left:2513.5px;top:919.2px;width:36.90000000000009px;height:36.09999999999991px;"></div>
<svg style="left:2513.5px;top:919.2px;" width="36.90000000000009" height="36.09999999999991" viewBox="0 0 36.90000000000009 36.09999999999991"><path d="M9 9 L28 28 M28 9 L9 28" stroke="#222" stroke-width="1.1"/></svg>
<span id="t125" class="t" style="top:962px;font-size:18px;line-height:20px;left:1589.60px;letter-spacing:-0.028px;">Responsibility</span>
<div class="cb" style="left:1736.2px;top:965px;width:20.5px;height:19.5px;"></div>
<div style="left:1770.4px;top:965px;width:20.5px;height:19.8px;background:#e6e6e6;border:1px solid #d2d2d2"></div>
<div class="combo" style="left:1805px;top:958.3px;width:745.4000000000001px;height:33.0px;"></div>
<svg style="left:2530.2000000000003px;top:971.3px;" width="11" height="7" viewBox="0 0 11 7"><path d="M1 1 L5.5 5.5 L10 1" stroke="#b4b4b4" stroke-width="1.6" fill="none"/></svg>
<span id="t126" class="t" style="top:1000px;font-size:18.17px;line-height:20px;left:1589.60px;letter-spacing:0.550px;">Item</span>
<div class="cb" style="left:1736.2px;top:1003.3px;width:20.5px;height:19.5px;"></div>
<div style="left:1770.4px;top:996.5px;width:739.0px;height:32.2px;background:#f5f5f5;border:1px solid #c9c9c9"></div>
<span id="t127" class="t" style="top:1000px;font-size:18px;line-height:20px;color:#7d7d7d;left:1774.00px;letter-spacing:-0.123px;">0801.002 - D10</span>
<div class="btn" style="left:2513.5px;top:994.6px;width:36.90000000000009px;height:36.89999999999998px;"></div>
<svg style="left:2513.5px;top:994.6px;" width="36.90000000000009" height="36.89999999999998" viewBox="0 0 36.90000000000009 36.89999999999998"><circle cx="10.5" cy="18" r="2.3" stroke="#111" stroke-width="1.1" fill="none"/><circle cx="18" cy="18" r="2.3" stroke="#111" stroke-width="1.1" fill="none"/><circle cx="25.5" cy="18" r="2.3" stroke="#111" stroke-width="1.1" fill="none"/></svg>
<div class="grp" style="left:1576px;top:1063px;width:991px;height:70px;"></div>
<div style="left:1584px;top:1061px;width:62.799999999999955px;height:6px;background:#f5f5f5"></div>
<span id="t128" class="t" style="top:1053px;font-size:18px;line-height:20px;color:#1c9ad6;font-weight:700;left:1587.00px;letter-spacing:-0.243px;">Status</span>
<span id="t129" class="t" style="top:1087px;font-size:18px;line-height:20px;left:1589.60px;letter-spacing:0.020px;">Status på objekt</span>
<div class="cb" style="left:1736.2px;top:1090.2px;width:20.5px;height:19.5px;"></div>
<div class="combo" style="left:1770.4px;top:1082.6px;width:780.0px;height:33.600000000000136px;"></div>
<svg style="left:2530.2000000000003px;top:1095.9px;" width="11" height="7" viewBox="0 0 11 7"><path d="M1 1 L5.5 5.5 L10 1" stroke="#b4b4b4" stroke-width="1.6" fill="none"/></svg>
<div class="grp" style="left:1576px;top:1149.5px;width:991px;height:107.5px;"></div>
<div style="left:1584px;top:1147.5px;width:130.5px;height:6px;background:#f5f5f5"></div>
<span id="t130" class="t" style="top:1141px;font-size:18px;line-height:20px;color:#1c9ad6;font-weight:700;left:1587.00px;letter-spacing:-0.194px;">Fast inredning</span>
<span id="t131" class="t" style="top:1174px;font-size:18px;line-height:20px;left:1589.60px;letter-spacing:0.334px;">Hängning</span>
<div class="cb" style="left:1736.2px;top:1177.7px;width:20.5px;height:19.5px;"></div>
<div class="combo" style="left:1773px;top:1169.5px;width:777.4000000000001px;height:33.5px;"></div>
<svg style="left:2530.2000000000003px;top:1182.75px;" width="11" height="7" viewBox="0 0 11 7"><path d="M1 1 L5.5 5.5 L10 1" stroke="#b4b4b4" stroke-width="1.6" fill="none"/></svg>
<span id="t132" class="t" style="top:1212px;font-size:18px;line-height:20px;left:1589.60px;letter-spacing:-0.057px;">Takanslutning</span>
<div class="cb" style="left:1736.2px;top:1214.5px;width:20.5px;height:19.5px;"></div>
<div class="combo" style="left:1773px;top:1207.2px;width:777.4000000000001px;height:33.299999999999955px;"></div>
<svg style="left:2530.2000000000003px;top:1220.35px;" width="11" height="7" viewBox="0 0 11 7"><path d="M1 1 L5.5 5.5 L10 1" stroke="#b4b4b4" stroke-width="1.6" fill="none"/></svg>
<div class="grp" style="left:1576px;top:1274px;width:991px;height:69.5px;"></div>
<div style="left:1584px;top:1272px;width:116.90000000000009px;height:6px;background:#f5f5f5"></div>
<span id="t133" class="t" style="top:1264px;font-size:18px;line-height:20px;color:#1c9ad6;font-weight:700;left:1587.00px;letter-spacing:0.261px;">New Priority</span>
<span id="t134" class="t" style="top:1299px;font-size:18px;line-height:20px;left:1589.60px;letter-spacing:0.326px;">Priority</span>
<div class="cb" style="left:1736.2px;top:1301.4px;width:20.5px;height:19.5px;"></div>
<div class="combo" style="left:1773px;top:1294.3px;width:777.4000000000001px;height:33.100000000000136px;"></div>
<svg style="left:2530.2000000000003px;top:1307.35px;" width="11" height="7" viewBox="0 0 11 7"><path d="M1 1 L5.5 5.5 L10 1" stroke="#b4b4b4" stroke-width="1.6" fill="none"/></svg>
<div class="grp" style="left:1576px;top:1362px;width:991px;height:69px;"></div>
<div style="left:1584px;top:1360px;width:109.20000000000005px;height:6px;background:#f5f5f5"></div>
<span id="t135" class="t" style="top:1351px;font-size:18px;line-height:20px;color:#1c9ad6;font-weight:700;left:1587.00px;letter-spacing:-0.200px;">dRofus web</span>
<span id="t136" class="t" style="top:1386px;font-size:18px;line-height:20px;left:1589.60px;letter-spacing:-0.118px;">dRofus web</span>
<div class="cb" style="left:1736.2px;top:1388.3px;width:20.5px;height:19.5px;"></div>
<div style="left:1770.4px;top:1381.2px;width:780.0px;height:33.3px;background:#f5f5f5;border:1px solid #c9c9c9"></div>
<div style="left:2306.4px;top:1497px;width:119px;height:29.5px;background:#f4f4f4;border:1.5px solid #c2c2c2"></div>
<span id="t137" class="t" style="top:1503px;font-size:18.05px;line-height:20px;color:#8c8c8c;left:2343.50px;letter-spacing:0.550px;">Undo</span>
<div style="left:2441.6px;top:1497px;width:119px;height:29.5px;background:#f4f4f4;border:1.5px solid #c2c2c2"></div>
<span id="t138" class="t" style="top:1503px;font-size:17.48px;line-height:20px;color:#8c8c8c;left:2481.80px;letter-spacing:-0.550px;">Save</span>
</body></html>
